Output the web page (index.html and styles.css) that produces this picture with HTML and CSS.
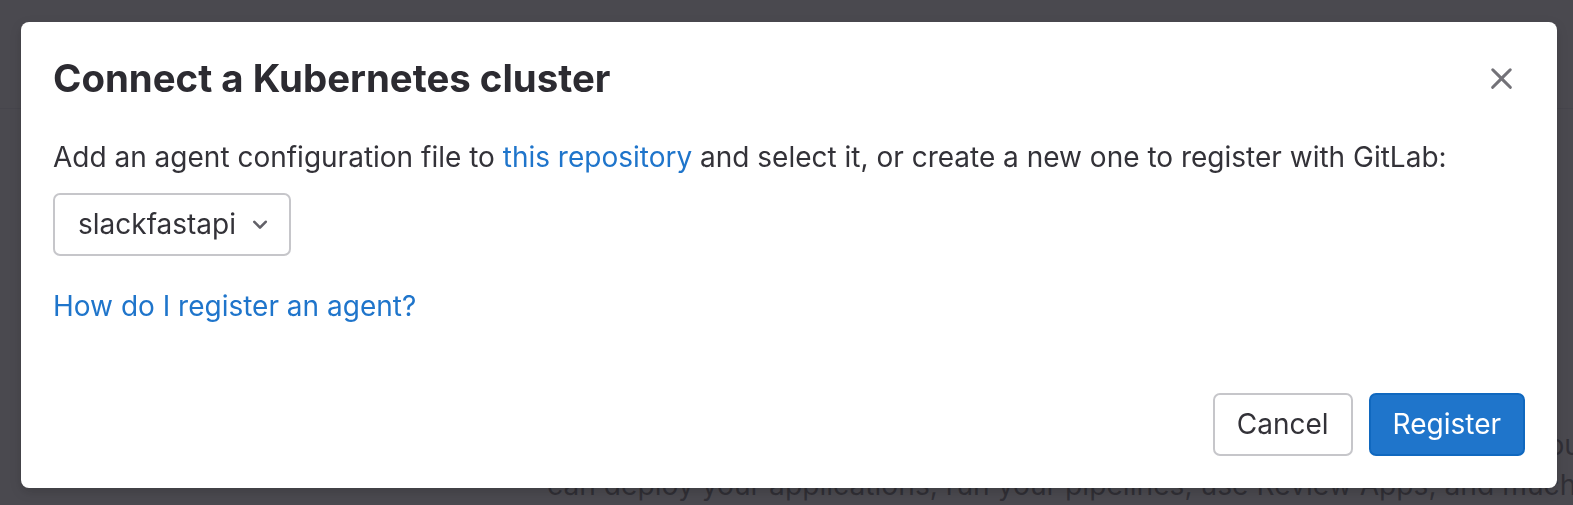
FILE: index.html
```html
<!DOCTYPE html>
<html lang="en">
<head>
<meta charset="utf-8">
<title>Connect a Kubernetes cluster</title>
<link rel="stylesheet" href="styles.css">
</head>
<body>
<div class="page">
  <header class="page-header"></header>
  <main class="page-content">
    <p class="bg-line bg-line-1">Use agents to connect a Kubernetes cluster to GitLab. With a connected cluster, you</p>
    <p class="bg-line bg-line-2">can deploy your applications, run your pipelines, use Review Apps, and much more.</p>
  </main>
</div>

<div class="backdrop"></div>

<div class="modal-wrap">
  <div class="modal" role="dialog" aria-labelledby="modal-title">
    <div class="modal-header">
      <h2 class="modal-title" id="modal-title">Connect a Kubernetes cluster</h2>
      <button class="close-btn" aria-label="Close">
        <svg viewBox="0 0 16 16" width="33" height="33"><path fill="#737278" d="M4.28 3.22a.75.75 0 0 0-1.06 1.06L6.94 8l-3.72 3.72a.75.75 0 1 0 1.06 1.06L8 9.06l3.72 3.72a.75.75 0 1 0 1.06-1.06L9.06 8l3.72-3.72a.75.75 0 0 0-1.06-1.06L8 6.94 4.28 3.22Z"/></svg>
      </button>
    </div>
    <div class="modal-body">
      <p class="intro">Add an agent configuration file to <a href="#">this repository</a> and select it, or create a new one to register with GitLab:</p>
      <button class="dropdown">
        <span>slackfastapi</span>
        <svg viewBox="0 0 16 16" width="28" height="28"><path fill="#626168" d="M4.22 6.22a.75.75 0 0 1 1.06 0L8 8.94l2.72-2.72a.75.75 0 1 1 1.06 1.06l-3.25 3.25a.75.75 0 0 1-1.06 0L4.22 7.28a.75.75 0 0 1 0-1.06Z"/></svg>
      </button>
      <p class="help"><a href="#">How do I register an agent?</a></p>
    </div>
    <div class="modal-footer">
      <button class="btn btn-default">Cancel</button>
      <button class="btn btn-confirm">Register</button>
    </div>
  </div>
</div>
</body>
</html>
```

FILE: styles.css
```css
* { box-sizing: border-box; }

html, body {
  margin: 0;
  height: 100%;
  overflow: hidden;
}

body {
  font-family: Inter, "Noto Sans", sans-serif;
  background: #ffffff;
  color: #1f1e24;
}

.page {
  height: 100%;
  overflow: hidden;
}

.page-header {
  height: 109px;
  border-bottom: 1px solid #dcdcde;
}

.page-content {
  padding-top: 316px;
  overflow: hidden;
}

.bg-line {
  margin: 0;
  font-size: 28.2px;
  line-height: 40px;
  white-space: nowrap;
  overflow: hidden;
}

.bg-line-1 {
  text-align: right;
  margin-right: -8px;
}

.bg-line-2 {
  padding-left: 547px;
}

.backdrop {
  position: fixed;
  inset: 0;
  background: rgba(51, 50, 56, 0.887);
}

.modal-wrap {
  position: fixed;
  inset: 0;
  padding: 22px 16px 0 21px;
}

.modal {
  background: #ffffff;
  border-radius: 8px;
  color: #333238;
  box-shadow: 0 4px 12px rgba(0, 0, 0, 0.16);
}

.modal-header {
  display: flex;
  align-items: center;
  justify-content: space-between;
  padding: 32px 32px 0 32px;
}

.modal-title {
  margin: 0;
  font-size: 38.4px;
  line-height: 46px;
  font-weight: 700;
  color: #2c2b31;
}

.close-btn {
  width: 48px;
  height: 48px;
  padding: 0;
  border: 0;
  background: transparent;
  display: flex;
  align-items: center;
  justify-content: center;
  cursor: pointer;
}

.modal-body {
  padding: 37px 32px 36px 32px;
}

.intro {
  margin: 0;
  font-size: 28px;
  line-height: 36.75px;
}

a {
  color: #1f75cb;
  text-decoration: none;
}

.dropdown {
  margin-top: 17px;
  height: 63px;
  display: inline-flex;
  align-items: center;
  gap: 10px;
  padding: 0 15px 0 23px;
  border: 2px solid #c6c6ca;
  border-radius: 7px;
  background: #ffffff;
  font-family: inherit;
  font-size: 28px;
  color: #333238;
}

.dropdown svg { display: block; }

.help {
  margin: 32px 0 0 0;
  font-size: 28px;
  line-height: 36.75px;
}

.modal-footer {
  display: flex;
  justify-content: flex-end;
  gap: 16px;
  padding: 32px;
}

.btn {
  height: 63px;
  padding: 0 22px;
  border-radius: 7px;
  font-family: inherit;
  font-size: 28px;
  cursor: pointer;
}

.btn-default {
  background: #ffffff;
  border: 2px solid #c6c6ca;
  color: #333238;
}

.btn-confirm {
  background: #1f75cb;
  border: 2px solid #1068bf;
  color: #ffffff;
}
```
